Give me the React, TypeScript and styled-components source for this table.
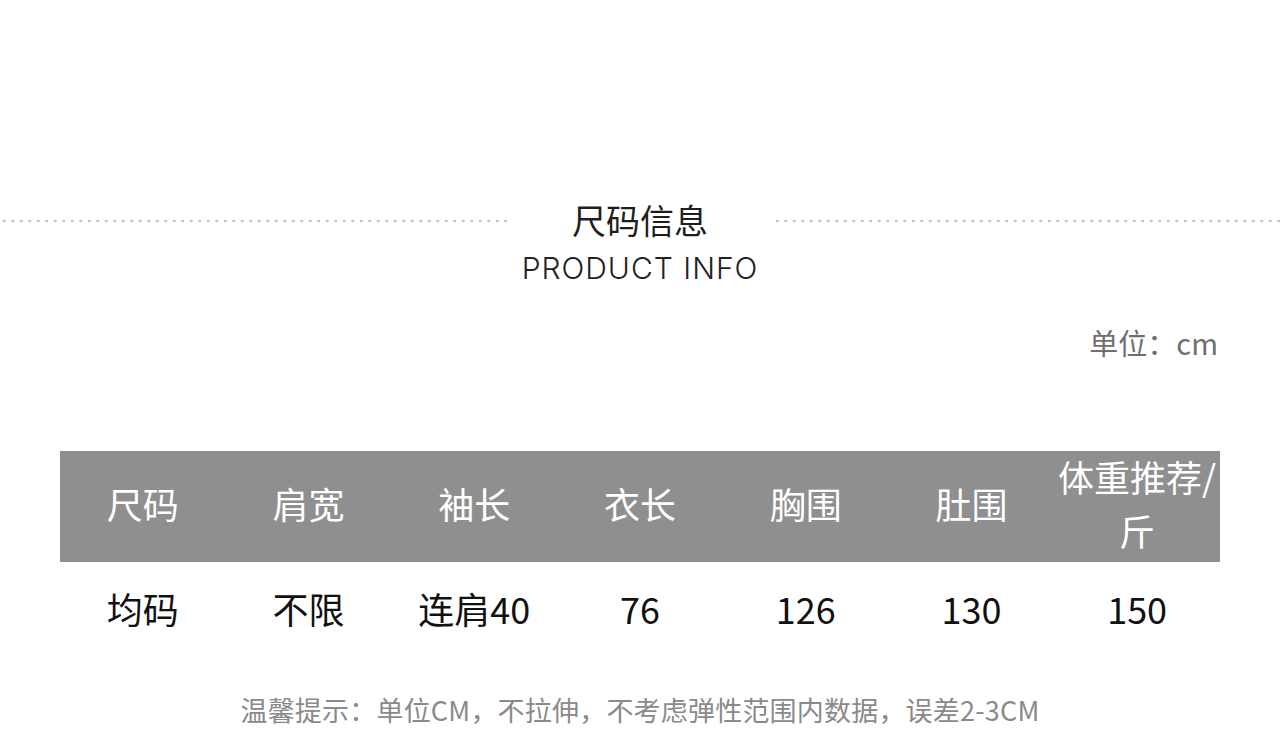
import { Fragment } from "react";
import { createGlobalStyle, styled } from "styled-components";

const GlobalStyle = createGlobalStyle`
  html, body {
    margin: 0;
    padding: 0;
    background: #ffffff;
  }
  body {
    font-family: "Noto Sans CJK SC", "Noto Sans", sans-serif;
  }
`;

const columns = ["尺码", "肩宽", "袖长", "衣长", "胸围", "肚围", "体重推荐/\n斤"];
const values = ["均码", "不限", "连肩40", "76", "126", "130", "150"];

export default function App() {
  return (
    <Page>
      <GlobalStyle />
      <Heading>
        <Dots />
        <TitleBlock>
          <Title>尺码信息</Title>
          <Subtitle>PRODUCT INFO</Subtitle>
        </TitleBlock>
        <Dots />
      </Heading>
      <Unit>单位：cm</Unit>
      <Table>
        {columns.map(col => (
          <HeadCell key={col}>
            {col.split("\n").map((line, i) => (
              <Fragment key={i}>
                {i > 0 && <br />}
                {line}
              </Fragment>
            ))}
          </HeadCell>
        ))}
        {values.map((v, i) => (
          <BodyCell key={i}>{v}</BodyCell>
        ))}
      </Table>
      <Note>温馨提示：单位CM，不拉伸，不考虑弹性范围内数据，误差2-3CM</Note>
    </Page>
  );
}

const Page = styled.div`
  width: 1280px;
  height: 732px;
  padding-top: 200px;
  box-sizing: border-box;
  overflow: hidden;
`;

const Heading = styled.div`
  display: flex;
  align-items: flex-start;
`;

const Dots = styled.div`
  flex: 1;
  height: 4px;
  margin-top: 19px;
  background-image: radial-gradient(circle, #c4c4c4 1.3px, transparent 1.6px);
  background-size: 8.5px 4px;
  background-repeat: repeat-x;
`;

const TitleBlock = styled.div`
  width: 266px;
  display: flex;
  flex-direction: column;
  align-items: center;
`;

const Title = styled.div`
  font-size: 34px;
  line-height: 40px;
  color: #1e1e1e;
`;

const Subtitle = styled.div`
  margin-top: 10px;
  font-family: "Inter", "DejaVu Sans", sans-serif;
  font-weight: 300;
  font-size: 30px;
  line-height: 36px;
  color: #222222;
  letter-spacing: 1px;
`;

const Unit = styled.div`
  margin-top: 38px;
  padding-right: 62px;
  text-align: right;
  font-size: 29px;
  line-height: 36px;
  color: #6f6f6f;
`;

const Table = styled.div`
  margin: 91px 60px 0;
  display: grid;
  grid-template-columns: repeat(7, 1fr);
  grid-template-rows: 111px 98px;
`;

const HeadCell = styled.div`
  background: #8f8f8f;
  color: #ffffff;
  font-size: 36px;
  line-height: 54px;
  padding-bottom: 8px;
  box-sizing: border-box;
  display: flex;
  align-items: center;
  justify-content: center;
  text-align: center;
  white-space: nowrap;
`;

const BodyCell = styled.div`
  color: #111111;
  font-size: 36px;
  padding-bottom: 6px;
  box-sizing: border-box;
  display: flex;
  align-items: center;
  justify-content: center;
`;

const Note = styled.div`
  margin-top: 34px;
  text-align: center;
  font-size: 27px;
  line-height: 32px;
  color: #8a8a8a;
  letter-spacing: 0.2px;
`;
